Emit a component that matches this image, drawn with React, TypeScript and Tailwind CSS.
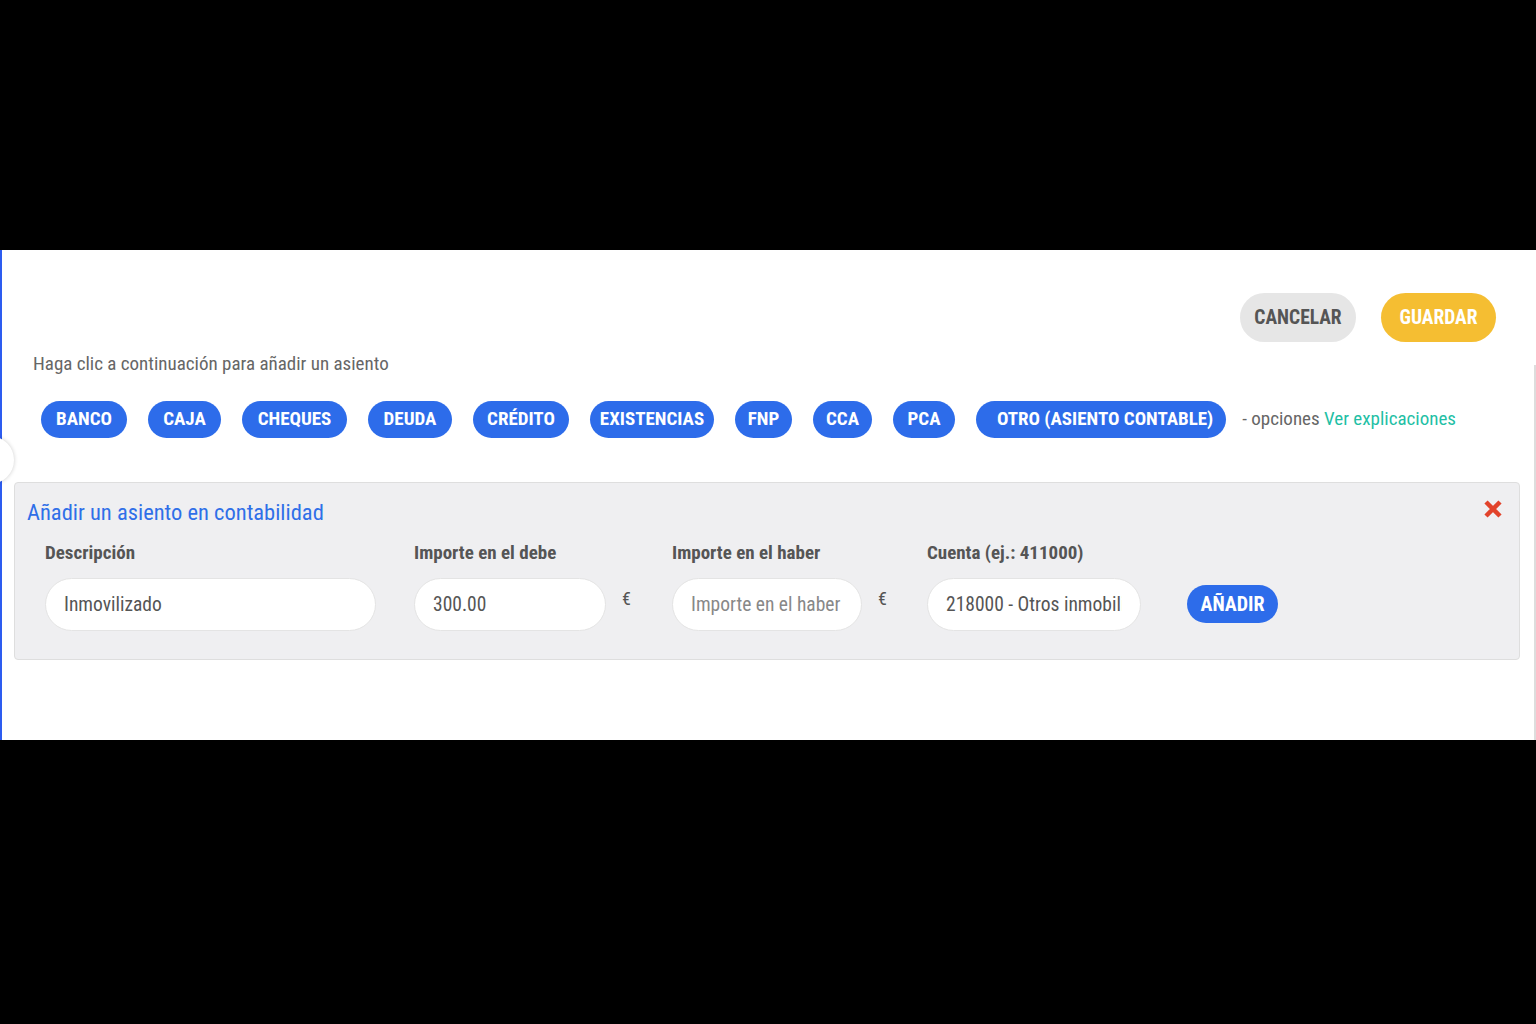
const tipos = [
  { label: 'BANCO', w: 'w-[86px]' },
  { label: 'CAJA', w: 'w-[73px]' },
  { label: 'CHEQUES', w: 'w-[105px]' },
  { label: 'DEUDA', w: 'w-[84px]' },
  { label: 'CRÉDITO', w: 'w-[96px]' },
  { label: 'EXISTENCIAS', w: 'w-[124px]' },
  { label: 'FNP', w: 'w-[57px]' },
  { label: 'CCA', w: 'w-[59px]' },
  { label: 'PCA', w: 'w-[62px]' },
]

function Pill({ label, className = '' }: { label: string; className?: string }) {
  return (
    <button className={`h-[37px] rounded-full bg-[#2d6cea] text-[19px] font-bold text-white ${className}`}>
      {label}
    </button>
  )
}

function Field({ label, children }: { label: string; children: React.ReactNode }) {
  return (
    <div className="flex flex-col">
      <label className="mb-[13px] text-[19px] leading-[24px] font-bold text-[#555]">{label}</label>
      {children}
    </div>
  )
}

const inputCls =
  'h-[53px] rounded-full border border-[#e4e4e4] bg-white px-[18px] text-[19.5px] text-[#555] outline-none font-stretch-condensed placeholder:text-[#888]'

export default function App() {
  return (
    <div className="flex h-[1024px] w-full flex-col bg-black font-['Roboto',sans-serif] font-stretch-condensed">
      <div className="h-[250px]" />
      <div className="relative h-[490px] border-l-2 border-[#2d5cf0] bg-white">
        {/* half hidden round handle on the left edge */}
        <div className="absolute left-[-36px] top-[186px] h-[48px] w-[48px] rounded-full bg-white shadow-[0_0_4px_rgba(0,0,0,0.2)]" />
        <div className="absolute right-0 top-[115px] h-[375px] w-[2px] bg-[#ddd]" />

        <div className="flex justify-end gap-[25px] pr-[40px] pt-[43px]">
          <button className="h-[49px] w-[116px] rounded-full bg-[#e6e6e6] text-[19.5px] font-bold text-[#555]">
            CANCELAR
          </button>
          <button className="h-[49px] w-[115px] rounded-full bg-[#f5be32] text-[19.5px] font-bold text-white">
            GUARDAR
          </button>
        </div>

        <p className="ml-[31px] mt-[8px] text-[19px] text-[#666]">
          Haga clic a continuación para añadir un asiento
        </p>

        <div className="ml-[39px] mt-[22px] flex items-center gap-[21px]">
          {tipos.map((t) => (
            <Pill key={t.label} label={t.label} className={t.w} />
          ))}
          <Pill label="OTRO (ASIENTO CONTABLE)" className="pl-[21px] pr-[13px]" />
          <span className="ml-[-5px] text-[19px] text-[#666]">
            - opciones <a className="text-[#1fbfa5]">Ver explicaciones</a>
          </span>
        </div>

        <div className="ml-[12px] mr-[16px] mt-[44px] h-[178px] rounded-[4px] border border-[#dedede] bg-[#efeff1] pl-[12px] pr-[16px] pt-[14px]">
          <div className="flex items-start justify-between">
            <h2 className="text-[22.5px] leading-[30px] text-[#2f6fe8]">Añadir un asiento en contabilidad</h2>
            <svg width="20" height="20" viewBox="0 0 20 20" className="mt-[2px]">
              <path d="M3 3 L17 17 M17 3 L3 17" stroke="#e2432b" strokeWidth="4.5" strokeLinecap="butt" />
            </svg>
          </div>
          <div className="ml-[18px] mt-[14px] flex items-end">
            <Field label="Descripción">
              <input className={`${inputCls} w-[331px]`} defaultValue="Inmovilizado" />
            </Field>
            <div className="ml-[38px] flex items-end">
              <Field label="Importe en el debe">
                <input className={`${inputCls} w-[192px]`} defaultValue="300.00" />
              </Field>
              <span className="mb-[19px] ml-[16px] w-[50px] text-[18px] text-[#555]">€</span>
            </div>
            <div className="flex items-end">
              <Field label="Importe en el haber">
                <input className={`${inputCls} w-[190px]`} placeholder="Importe en el haber" />
              </Field>
              <span className="mb-[19px] ml-[16px] w-[49px] text-[18px] text-[#555]">€</span>
            </div>
            <Field label="Cuenta (ej.: 411000)">
              <input className={`${inputCls} w-[214px]`} defaultValue="218000 - Otros inmobilizado material" />
            </Field>
            <button className="mb-[8px] ml-[46px] h-[38px] w-[91px] rounded-full bg-[#2d6cea] text-[20px] font-bold text-white">
              AÑADIR
            </button>
          </div>
        </div>
      </div>
    </div>
  )
}
